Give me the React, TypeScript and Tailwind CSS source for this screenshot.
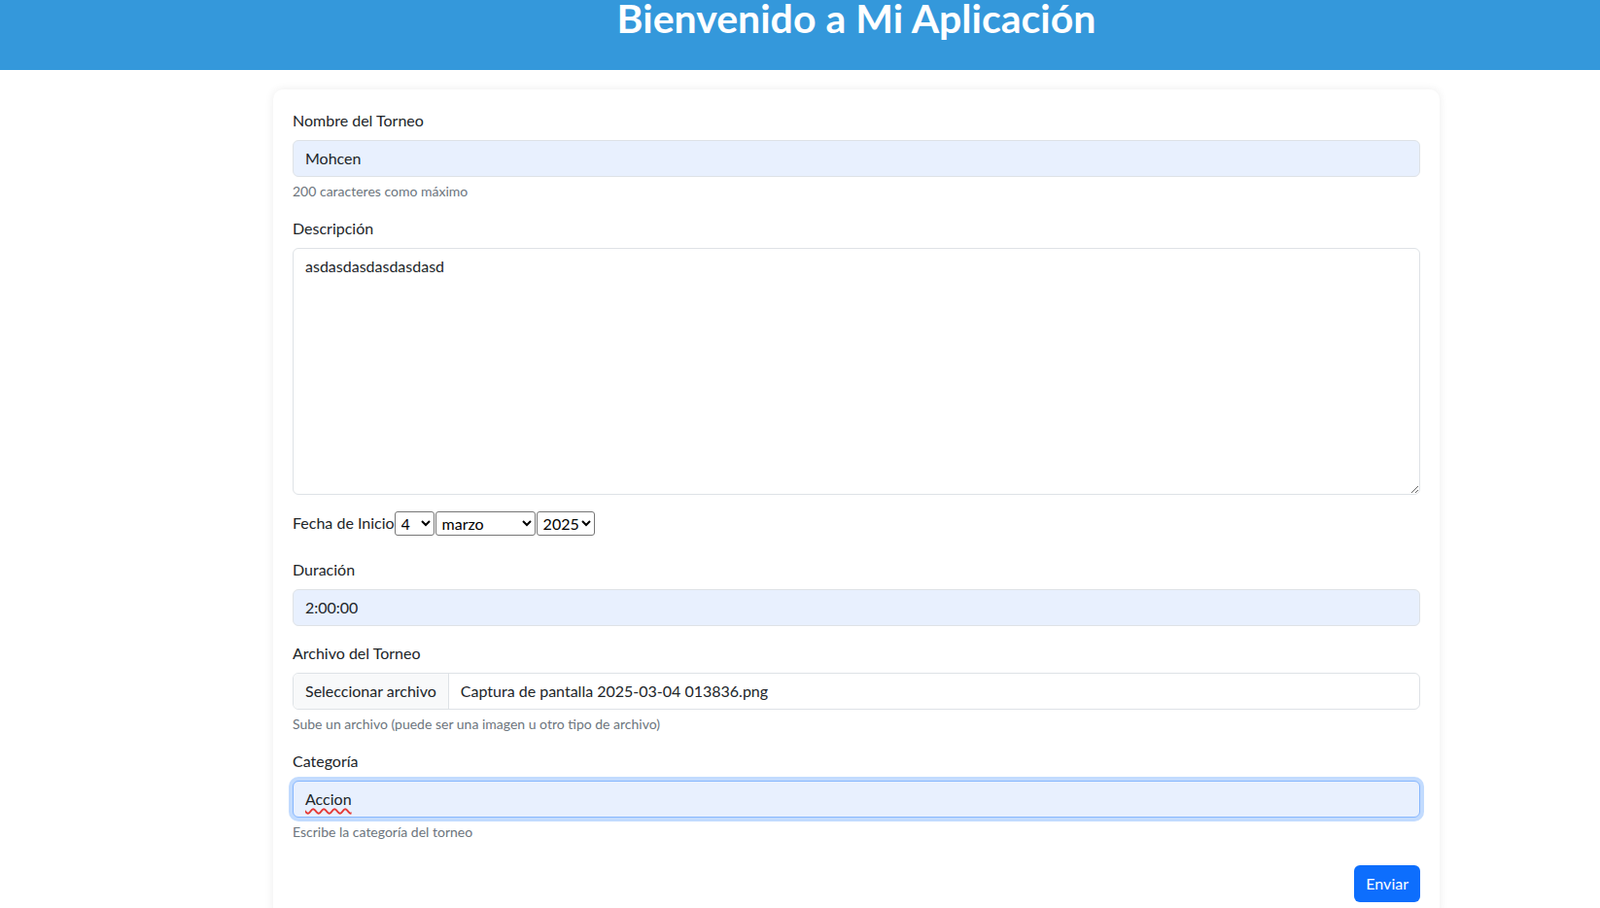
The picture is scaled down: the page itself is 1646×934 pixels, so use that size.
import { useState } from "react";

const font = "font-['Segoe_UI','Lato',sans-serif]";

function Label({ children }: { children: React.ReactNode }) {
  return <label className="mb-2 block text-base leading-6 text-[#212529]">{children}</label>;
}

function Help({ children }: { children: React.ReactNode }) {
  return <div className="mt-1 text-sm leading-[21px] text-[#6c757d]">{children}</div>;
}

const inputCls =
  "block w-full rounded-md border border-[#dee2e6] px-3 py-1.5 text-base leading-6 text-[#212529] outline-none";

const selectCls =
  "h-[25px] rounded-[3px] border border-[#767676] bg-white pl-[2px] text-base leading-5 text-black";

export default function App() {
  const [nombre, setNombre] = useState("Mohcen");
  const [desc, setDesc] = useState("asdasdasdasdasdasd");
  const [dur, setDur] = useState("2:00:00");
  const [cat, setCat] = useState("Accion");

  const months = [
    "enero", "febrero", "marzo", "abril", "mayo", "junio",
    "julio", "agosto", "septiembre", "octubre", "noviembre", "diciembre",
  ];

  return (
    <div className={`${font} min-h-screen bg-white text-[#212529]`}>
      <header className="h-[72px] overflow-hidden bg-[#3498db] pl-[116px] text-center">
        <h1 className="-mt-[5px] text-[41px] font-bold leading-[48px] text-white">
          Bienvenido a Mi Aplicación
        </h1>
      </header>

      <main className="ml-[281px] mt-5 w-[1200px] rounded-[10px] bg-white p-5 shadow-[0_0_10px_rgba(0,0,0,0.08)]">
        <form onSubmit={(e) => e.preventDefault()}>
          <div className="mb-4">
            <Label>Nombre del Torneo</Label>
            <input
              className={`${inputCls} bg-[#e8f0fe]`}
              value={nombre}
              onChange={(e) => setNombre(e.target.value)}
            />
            <Help>200 caracteres como máximo</Help>
          </div>

          <div className="mb-4">
            <Label>Descripción</Label>
            <textarea
              rows={10}
              className={`${inputCls} resize-y bg-white`}
              value={desc}
              onChange={(e) => setDesc(e.target.value)}
            />
          </div>

          <div className="mb-[23px] flex h-[26px] items-center text-base">
            <span>Fecha de Inicio</span>
            <select defaultValue="4" className={`${selectCls} w-[41px]`}>
              {Array.from({ length: 31 }, (_, i) => (
                <option key={i} value={String(i + 1)}>
                  {i + 1}
                </option>
              ))}
            </select>
            <select defaultValue="marzo" className={`${selectCls} ml-[1px] w-[103px]`}>
              {months.map((m) => (
                <option key={m} value={m}>
                  {m}
                </option>
              ))}
            </select>
            <select defaultValue="2025" className={`${selectCls} ml-[1px] w-[60px]`}>
              {[2024, 2025, 2026, 2027].map((y) => (
                <option key={y} value={String(y)}>
                  {y}
                </option>
              ))}
            </select>
          </div>

          <div className="mb-4">
            <Label>Duración</Label>
            <input
              className={`${inputCls} bg-[#e8f0fe]`}
              value={dur}
              onChange={(e) => setDur(e.target.value)}
            />
          </div>

          <div className="mb-4">
            <Label>Archivo del Torneo</Label>
            <div className="flex h-[38px] w-full overflow-hidden rounded-md border border-[#dee2e6] text-base leading-6">
              <span className="flex items-center border-r border-[#dee2e6] bg-[#f8f9fa] px-3">
                Seleccionar archivo
              </span>
              <span className="flex items-center px-3">Captura de pantalla 2025-03-04 013836.png</span>
            </div>
            <Help>Sube un archivo (puede ser una imagen u otro tipo de archivo)</Help>
          </div>

          <div className="mb-4">
            <Label>Categoría</Label>
            <div className="flex h-[38px] w-full items-center rounded-md border border-[#86b7fe] bg-[#e8f0fe] px-3 text-base leading-6 shadow-[0_0_0_4px_rgba(13,110,253,0.25)]">
              <span className="underline decoration-[#e53935] decoration-wavy decoration-[1.5px] underline-offset-[3px]">
                {cat}
              </span>
              <input
                className="sr-only"
                value={cat}
                onChange={(e) => setCat(e.target.value)}
              />
            </div>
            <Help>Escribe la categoría del torneo</Help>
          </div>

          <div className="flex justify-end pt-2">
            <button
              type="submit"
              className="h-[38px] rounded-md bg-[#0d6efd] px-3 text-base leading-6 text-white"
            >
              Enviar
            </button>
          </div>
        </form>
      </main>
    </div>
  );
}
